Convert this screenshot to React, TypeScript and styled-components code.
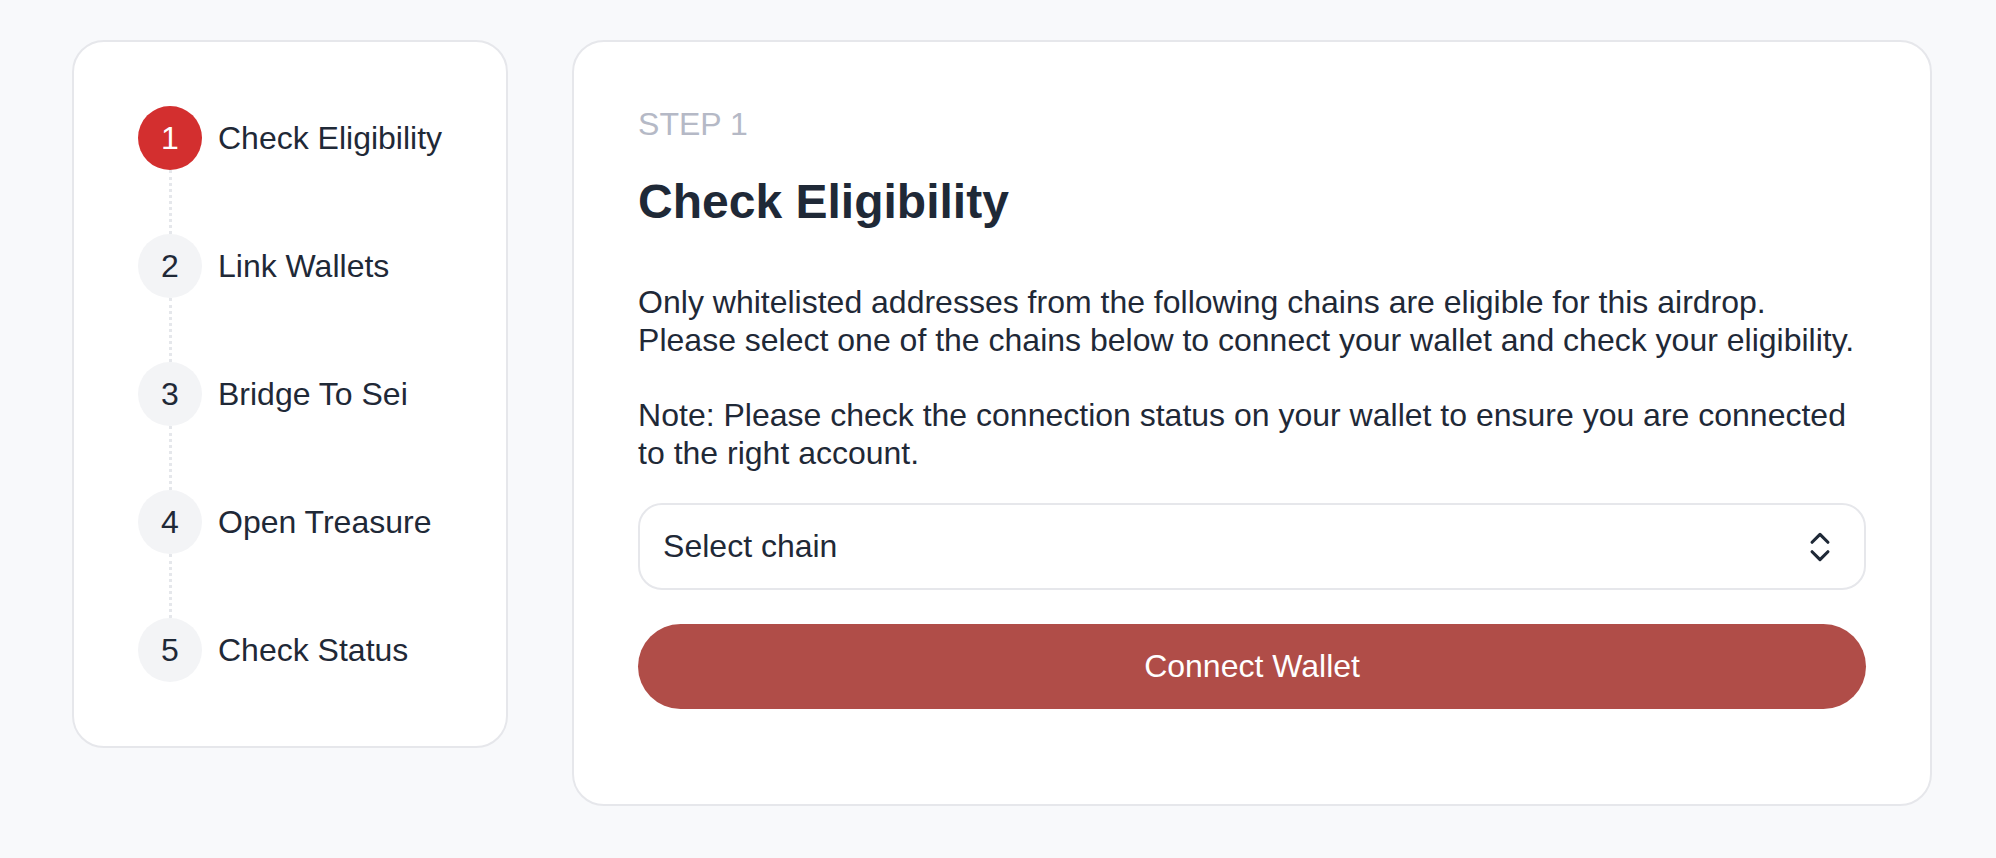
import { Fragment } from "react";
import styled, { createGlobalStyle } from "styled-components";
import { ChevronsUpDown } from "lucide-react";

const steps = [
  "Check Eligibility",
  "Link Wallets",
  "Bridge To Sei",
  "Open Treasure",
  "Check Status",
];

const current = 0;

export default function App() {
  return (
    <>
      <GlobalStyle />
      <Page>
        <Sidebar>
          {steps.map((label, i) => (
            <Fragment key={label}>
              {i > 0 && <Connector />}
              <StepRow>
                <StepBadge $active={i === current}>{i + 1}</StepBadge>
                <StepLabel>{label}</StepLabel>
              </StepRow>
            </Fragment>
          ))}
        </Sidebar>

        <Panel>
          <Eyebrow>STEP 1</Eyebrow>
          <Title>Check Eligibility</Title>
          <Text>
            Only whitelisted addresses from the following chains are eligible
            for this airdrop.
            <br />
            Please select one of the chains below to connect your wallet and
            check your eligibility.
          </Text>
          <Note>
            Note: Please check the connection status on your wallet to ensure
            you are connected to the right account.
          </Note>
          <Select type="button">
            <span>Select chain</span>
            <ChevronsUpDown size={38} strokeWidth={2} />
          </Select>
          <ConnectButton type="button">Connect Wallet</ConnectButton>
        </Panel>
      </Page>
    </>
  );
}

const GlobalStyle = createGlobalStyle`
  body {
    margin: 0;
    background: #f8f9fb;
    font-family: "Liberation Sans", Arial, sans-serif;
    color: #1f2937;
  }
`;

const Page = styled.div`
  display: flex;
  align-items: flex-start;
  gap: 64px;
  padding: 40px 64px 40px 72px;
`;

const Card = styled.div`
  background: #ffffff;
  border: 2px solid #e6e7eb;
  border-radius: 32px;
  box-sizing: border-box;
`;

const Sidebar = styled(Card)`
  flex: none;
  display: flex;
  flex-direction: column;
  padding: 64px;
`;

const StepRow = styled.div`
  display: flex;
  align-items: center;
  gap: 16px;
  height: 64px;
`;

const StepBadge = styled.div<{ $active: boolean }>`
  width: 64px;
  height: 64px;
  border-radius: 50%;
  display: flex;
  align-items: center;
  justify-content: center;
  font-size: 32px;
  background: ${(p) => (p.$active ? "#d32f2f" : "#f3f4f6")};
  color: ${(p) => (p.$active ? "#ffffff" : "#1f2937")};
`;

const StepLabel = styled.span`
  font-size: 32px;
  line-height: 37px;
  white-space: nowrap;
`;

const Connector = styled.div`
  width: 64px;
  height: 64px;
  display: flex;
  justify-content: center;

  &::before {
    content: "";
    border-left: 3px dotted #e5e7eb;
  }
`;

const Panel = styled(Card)`
  flex: 1;
  display: flex;
  flex-direction: column;
  padding: 64px 64px 95px;
`;

const Eyebrow = styled.div`
  font-size: 32px;
  line-height: 37px;
  color: #b5b9c6;
`;

const Title = styled.h1`
  margin: 31px 0 0;
  font-size: 48px;
  line-height: 56px;
  font-weight: 700;
  color: #1f2937;
`;

const Text = styled.p`
  margin: 53px 0 0;
  font-size: 32px;
  line-height: 38px;
`;

const Note = styled(Text)`
  margin-top: 37px;
`;

const Select = styled.button`
  margin-top: 31px;
  height: 87px;
  box-sizing: border-box;
  display: flex;
  align-items: center;
  justify-content: space-between;
  padding: 0 25px 0 23px;
  background: #ffffff;
  border: 2px solid #e6e7eb;
  border-radius: 24px;
  font: inherit;
  font-size: 32px;
  color: #1f2937;
  text-align: left;
`;

const ConnectButton = styled.button`
  margin-top: 34px;
  height: 85px;
  border: none;
  border-radius: 999px;
  background: #b04d48;
  color: #ffffff;
  font: inherit;
  font-size: 32px;
`;
